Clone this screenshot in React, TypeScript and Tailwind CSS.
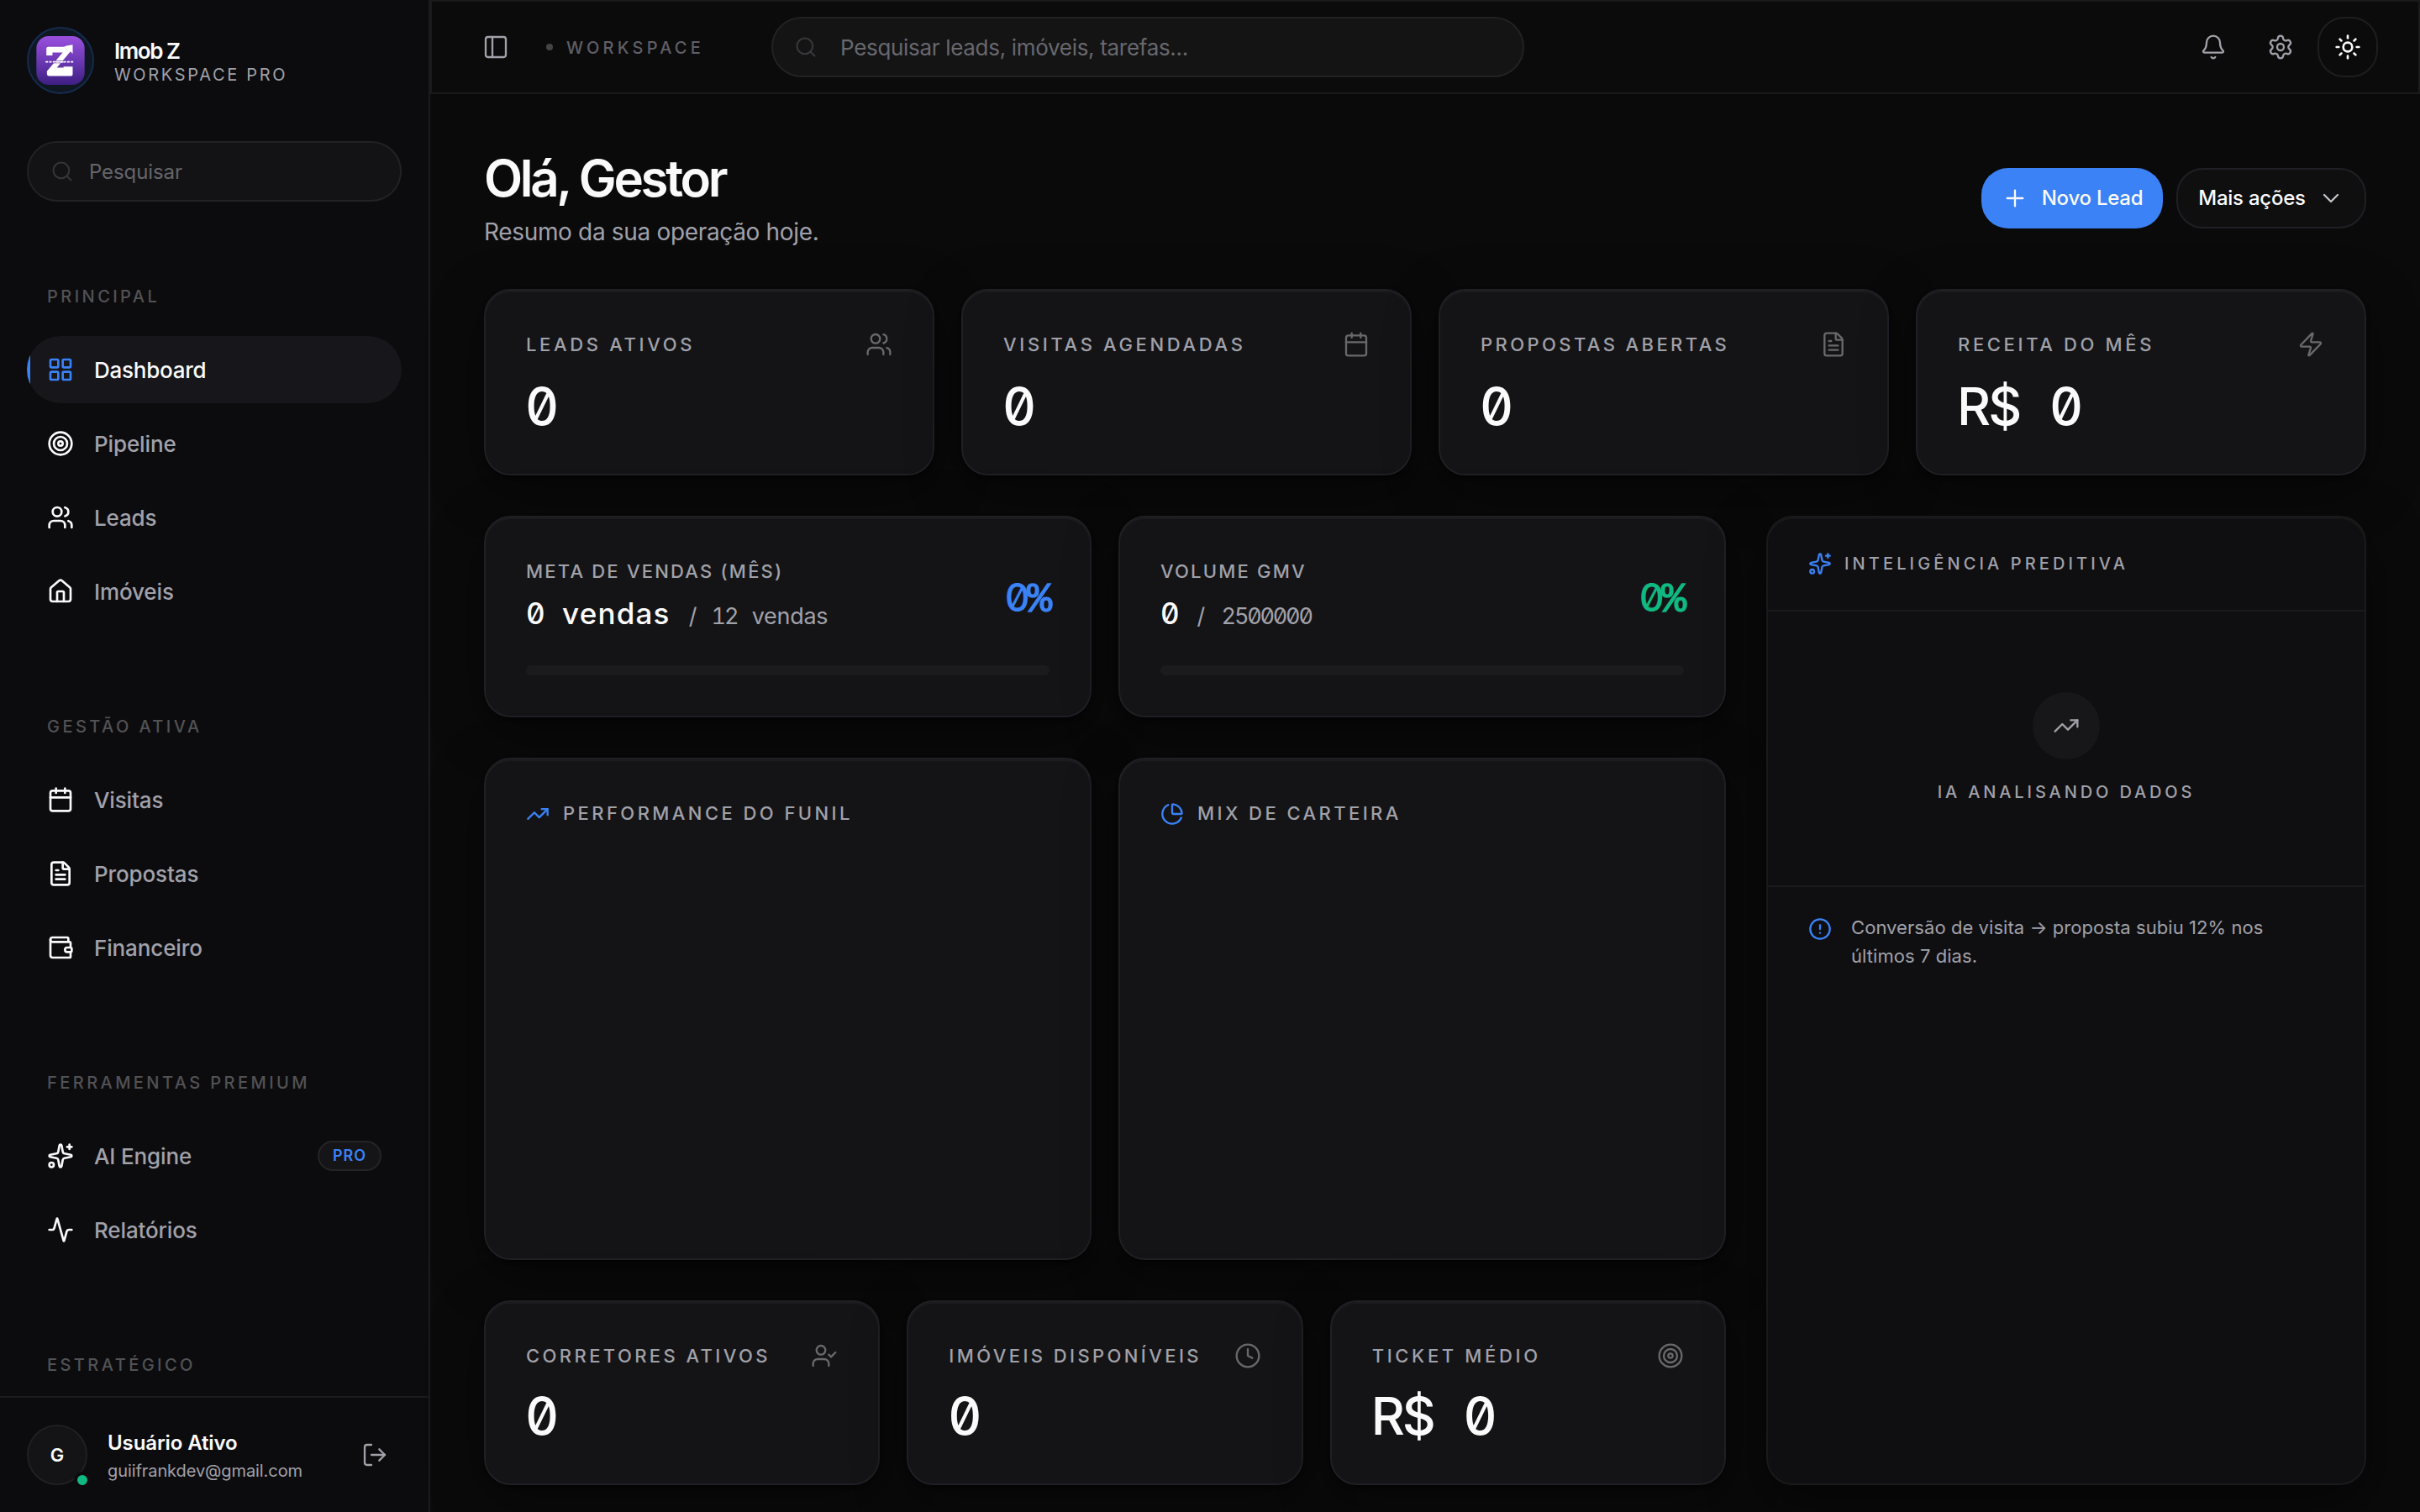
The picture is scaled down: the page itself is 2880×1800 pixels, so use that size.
import type { ReactNode } from "react";
import {
  Activity,
  Bell,
  Calendar,
  ChartPie,
  ChevronDown,
  CircleAlert,
  Clock,
  FileText,
  House,
  LayoutGrid,
  LogOut,
  PanelLeft,
  Plus,
  Search,
  Settings,
  Sparkles,
  Sun,
  Target,
  TrendingUp,
  UserCheck,
  Users,
  Wallet,
  Zap,
  type LucideIcon,
} from "lucide-react";

type NavItem = { label: string; icon: LucideIcon; active?: boolean; badge?: string };

const sections: { title: string; items: NavItem[] }[] = [
  {
    title: "PRINCIPAL",
    items: [
      { label: "Dashboard", icon: LayoutGrid, active: true },
      { label: "Pipeline", icon: Target },
      { label: "Leads", icon: Users },
      { label: "Imóveis", icon: House },
    ],
  },
  {
    title: "GESTÃO ATIVA",
    items: [
      { label: "Visitas", icon: Calendar },
      { label: "Propostas", icon: FileText },
      { label: "Financeiro", icon: Wallet },
    ],
  },
  {
    title: "FERRAMENTAS PREMIUM",
    items: [
      { label: "AI Engine", icon: Sparkles, badge: "PRO" },
      { label: "Relatórios", icon: Activity },
    ],
  },
  { title: "ESTRATÉGICO", items: [] },
];

const CARD =
  "rounded-[32px] border-2 border-[#1f1f25] bg-[#141416] shadow-[inset_0_2px_0_rgba(255,255,255,0.035),0_2px_4px_rgba(0,0,0,0.5),0_16px_64px_rgba(0,0,0,0.4)]";

const NUM = "[font-feature-settings:'zero','tnum']";

function Logo() {
  return (
    <div className="flex size-20 shrink-0 items-center justify-center rounded-full border-2 border-[#162b4e] bg-[#0f1722]">
      <svg viewBox="0 0 174 176" className="h-[58px] w-[58px]">
        <defs>
          <linearGradient id="logo-bg" x1="0" y1="0" x2="0" y2="1">
            <stop offset="0" stopColor="#9a50de" />
            <stop offset="0.5" stopColor="#6d39b4" />
            <stop offset="1" stopColor="#3d1f83" />
          </linearGradient>
        </defs>
        <rect width="174" height="176" rx="44" fill="url(#logo-bg)" />
        <path
          d="M42 39 H94 Q102 39 108 35 L131 31 V64 L123 55 L74 114 H98 V110 H131 V138 Q131 144 125 144 H46 Q38 144 38 136 V127 L95 59 H58 V70 H36 V45 Q36 39 42 39 Z"
          fill="#fff"
        />
        <path d="M33 93 H136" stroke="#6a38b0" strokeWidth="10" />
        <path d="M33 93 H136" stroke="#fff" strokeWidth="5" strokeDasharray="9 4" />
        <path d="M68 93 H98" stroke="#fff" strokeWidth="5" />
      </svg>
    </div>
  );
}

function Sidebar() {
  return (
    <aside className="flex h-full w-[512px] shrink-0 flex-col border-r-2 border-[#1b1b1d] bg-[#0c0c0e]">
      <div className="flex min-h-0 flex-1 flex-col overflow-hidden px-8 pt-8">
        <div className="flex shrink-0 items-center gap-6">
          <Logo />
          <div>
            <div className="text-[26px] leading-[33px] font-semibold tracking-[-0.055em] text-[#fafafa]">Imob Z</div>
            <div className="text-[20px] leading-[24px] tracking-[0.133em] text-[#a1a1aa]">WORKSPACE PRO</div>
          </div>
        </div>
        <div className="mt-14 flex h-[72px] shrink-0 items-center gap-[18px] rounded-[36px] border-2 border-[#222224] bg-[#131315] pl-[26px]">
          <Search size={28} strokeWidth={1.75} className="text-[#36363a]" />
          <span className="pt-0.5 text-[24px] leading-9 tracking-[-0.1px] text-[#65656b]">Pesquisar</span>
        </div>
        <nav className="flex shrink-0 flex-col gap-[106px] pt-[98px]">
          {sections.map((section) => (
            <div key={section.title}>
              <div className="mb-8 pl-6 text-[20px] leading-[30px] font-medium tracking-[0.172em] text-[#525255]">
                {section.title}
              </div>
              <div className="flex flex-col gap-2">
                {section.items.map(({ label, icon: Icon, active, badge }) => (
                  <div
                    key={label}
                    className={
                      active
                        ? "relative flex h-20 items-center gap-6 overflow-hidden rounded-[40px] bg-[#16161b] px-6"
                        : "flex h-20 items-center gap-6 px-6"
                    }
                  >
                    {active && <span className="absolute top-5 left-0 h-10 w-1 bg-[#3b82f6]" />}
                    <Icon size={32} strokeWidth={2} className={active ? "text-[#3b82f6]" : "text-[#fafafa]"} />
                    <span
                      className={
                        active
                          ? "text-[26px] leading-[39px] font-medium tracking-[-0.01em] text-[#fafafa]"
                          : "text-[26px] leading-[39px] font-medium tracking-[-0.005em] text-[#a1a1aa]"
                      }
                    >
                      {label}
                    </span>
                    {badge && (
                      <span className="ml-auto flex h-9 items-center rounded-full border-2 border-[#242426] bg-[#151517] px-4 text-[18px] leading-none font-semibold tracking-[0.05em] text-[#3b82f6]">
                        {badge}
                      </span>
                    )}
                  </div>
                ))}
              </div>
            </div>
          ))}
        </nav>
      </div>
      <div className="flex shrink-0 items-center gap-6 border-t-2 border-[#1b1b1d] p-8">
        <div className="relative flex size-[72px] shrink-0 items-center justify-center rounded-full border-2 border-[#202022] bg-[#141416] text-[22px] font-semibold text-[#fafafa]">
          G
          <span className="absolute -right-1.5 -bottom-1.5 size-5 rounded-full border-4 border-[#0c0c0e] bg-[#10b981]" />
        </div>
        <div className="flex-1">
          <div className="text-[24px] leading-[38px] font-semibold tracking-[-0.1px] text-[#fafafa]">Usuário Ativo</div>
          <div className="text-[20px] leading-[29px] tracking-[-0.08px] text-[#a1a1aa]">guiifrankdev@gmail.com</div>
        </div>
        <button className="flex size-16 items-center justify-center text-[#a1a1aa]">
          <LogOut size={32} strokeWidth={1.75} />
        </button>
      </div>
    </aside>
  );
}

function Header() {
  return (
    <header className="flex h-28 shrink-0 items-center border-2 border-[#1a1a1b] bg-[#0b0b0b] px-12">
      <button className="flex size-14 items-center justify-center text-[#a1a1aa]">
        <PanelLeft size={32} strokeWidth={1.75} />
      </button>
      <div className="ml-8 flex w-[268px] items-center gap-4">
        <span className="size-2 rounded-full bg-[#444446]" />
        <span className="pt-px text-[20px] leading-[30px] font-medium tracking-[0.21em] text-[#5f5f65]">WORKSPACE</span>
      </div>
      <div className="flex h-[72px] w-[896px] items-center gap-[27px] rounded-[36px] border-2 border-[#222223] bg-[#141415] pl-[25px]">
        <Search size={28} strokeWidth={1.75} className="text-[#39393c]" />
        <span className="text-[26px] leading-[39px] tracking-[-0.012em] text-[#68686e]">
          Pesquisar leads, imóveis, tarefas...
        </span>
      </div>
      <div className="ml-auto flex items-center gap-2 text-[#a1a1aa]">
        <button className="flex size-[72px] items-center justify-center">
          <Bell size={32} strokeWidth={1.75} />
        </button>
        <button className="flex size-[72px] items-center justify-center">
          <Settings size={32} strokeWidth={1.75} />
        </button>
        <button className="flex size-[72px] items-center justify-center rounded-[32px] border-2 border-[#1e1e1f] text-[#fafafa]">
          <Sun size={32} strokeWidth={2} />
        </button>
      </div>
    </header>
  );
}

type StatProps = { label: string; icon: LucideIcon; value: string; compact?: boolean; tight?: boolean };

function Stat({ label, icon: Icon, value, compact, tight }: StatProps) {
  return (
    <div className={`${CARD} p-12`}>
      <div className="flex h-8 items-center justify-between">
        <span
          className={`${tight ? "tracking-[0.155em]" : "tracking-[0.166em]"} text-[22px] leading-8 font-medium whitespace-nowrap text-[#a1a1aa]`}
        >
          {label}
        </span>
        <Icon size={32} strokeWidth={1.75} className="shrink-0 text-[#69696d]" />
      </div>
      <div
        className={`${NUM} ${compact ? "mt-6" : "mt-[26px]"} -ml-px h-16 text-[62px] leading-[64px] font-medium tracking-[-3px] [word-spacing:22px] whitespace-nowrap text-[#fafafa]`}
      >
        {value}
      </div>
    </div>
  );
}

function Goal({ label, value, target, color }: { label: string; value: ReactNode; target: ReactNode; color: string }) {
  return (
    <div className={`${CARD} h-[240px] p-12`}>
      <div className="mb-[34px] flex h-[94px] items-center justify-between">
        <div className="h-[94px]">
          <div className="text-[22px] leading-[33px] font-medium tracking-[0.1em] text-[#a1a1aa]">{label}</div>
          <div className={`${NUM} mt-2 h-[51px] text-[35px] leading-[51px] font-medium whitespace-nowrap text-[#fafafa]`}>
            {value}
            <span className="ml-[22px] text-[27px] font-normal text-[#a1a1aa] [word-spacing:10px]">/ {target}</span>
          </div>
        </div>
        <div className={`${NUM} ${color} flex items-baseline text-[47px] leading-[66px] font-medium`}>
          <span className="tracking-[-4px]">0</span>
          <span className="font-['Liberation_Mono',monospace] text-[50px] leading-none font-normal tracking-[-3px] [-webkit-text-stroke:1.5px_currentColor]">
            %
          </span>
        </div>
      </div>
      <div className="h-3 rounded-full bg-[#1b1b1d]" />
    </div>
  );
}

function ChartCard({ label, icon: Icon }: { label: string; icon: LucideIcon }) {
  return (
    <div className={`${CARD} h-[598px] p-12`}>
      <div className="flex items-center gap-4">
        <Icon size={28} strokeWidth={2} className="text-[#3b82f6]" />
        <span className="text-[22px] leading-[33px] font-medium tracking-[0.156em] text-[#a1a1aa]">{label}</span>
      </div>
    </div>
  );
}

function Insights() {
  return (
    <div className="w-[714px] shrink-0 rounded-[32px] border-2 border-[#1a1a1b] bg-[#0f0f11] shadow-[inset_0_2px_0_rgba(255,255,255,0.035),0_24px_64px_rgba(0,0,0,0.5)]">
      <div className="flex items-center gap-[15px] border-b-2 border-[#1a1a1b] px-12 py-10">
        <Sparkles size={28} strokeWidth={2} className="text-[#3b82f6]" />
        <span className="text-[20px] leading-[30px] font-medium tracking-[0.206em] text-[#a1a1aa]">INTELIGÊNCIA PREDITIVA</span>
      </div>
      <div className="flex flex-col items-center gap-6 border-b-2 border-[#1a1a1b] py-24">
        <div className="flex size-20 items-center justify-center rounded-full bg-[#171719] text-[#a1a1aa]">
          <TrendingUp size={32} strokeWidth={1.75} />
        </div>
        <span className="text-[20px] leading-[30px] font-medium tracking-[0.194em] text-[#a1a1aa]">IA ANALISANDO DADOS</span>
      </div>
      <div className="flex gap-[23px] px-12 pt-8">
        <CircleAlert size={28} strokeWidth={2} className="mt-1 shrink-0 text-[#3b82f6]" />
        <p className="-mt-px w-[510px] text-[22px] leading-[34px] tracking-[0.06px] text-[#a1a1aa]">
          Conversão de visita → proposta subiu 12% nos últimos 7 dias.
        </p>
      </div>
    </div>
  );
}

export default function App() {
  return (
    <div className="flex h-[1800px] w-[2880px] overflow-hidden bg-[#0a0a0a] font-[Inter,sans-serif] antialiased">
      <Sidebar />
      <div className="flex min-w-0 flex-1 flex-col">
        <Header />
        <main className="px-16 pt-16">
          <div className="mb-12 flex h-[120px] items-center justify-between">
            <div className="h-[120px]">
              <h1 className="text-[60px] leading-[72px] font-semibold tracking-[-0.055em] text-[#fafafa]">Olá, Gestor</h1>
              <p className="mt-[7px] text-[28px] leading-[42px] tracking-[-0.012em] text-[#a1a1aa]">
                Resumo da sua operação hoje.
              </p>
            </div>
            <div className="flex gap-4 text-[24px] leading-9 font-medium tracking-[-0.01em] whitespace-nowrap text-[#fafafa]">
              <button className="flex h-[72px] w-[216px] items-center justify-center gap-4 rounded-[32px] bg-[#3b82f6]">
                <Plus size={32} strokeWidth={1.75} className="shrink-0" />
                Novo Lead
              </button>
              <button className="flex h-[72px] w-[226px] items-center justify-center gap-3.5 rounded-[32px] border-2 border-[#1f1f25] bg-[#0f0f10]">
                Mais ações
                <ChevronDown size={32} strokeWidth={1.75} className="shrink-0 text-[#c4c4c8]" />
              </button>
            </div>
          </div>

          <div className="grid h-[222px] grid-cols-4 gap-8">
            <Stat label="LEADS ATIVOS" icon={Users} value="0" />
            <Stat label="VISITAS AGENDADAS" icon={Calendar} value="0" />
            <Stat tight label="PROPOSTAS ABERTAS" icon={FileText} value="0" />
            <Stat label="RECEITA DO MÊS" icon={Zap} value="R$ 0" />
          </div>

          <div className="mt-12 flex gap-12">
            <div className="flex flex-1 flex-col gap-12">
              <div className="grid grid-cols-2 gap-8">
                <Goal
                  label="META DE VENDAS (MÊS)"
                  color="text-[#3b82f6]"
                  value={
                    <span className="[word-spacing:12px]">
                      <span className="tracking-[-1.1px]">0</span> <span className="tracking-[1.2px]">vendas</span>
                    </span>
                  }
                  target={
                    <>
                      <span className="tracking-[-2.1px]">12</span> <span className="tracking-[-0.3px]">vendas</span>
                    </>
                  }
                />
                <Goal
                  label="VOLUME GMV"
                  color="text-[#10b981]"
                  value={<span className="tracking-[-1.1px]">0</span>}
                  target={<span className="ml-0.5 tracking-[-2.2px]">2500000</span>}
                />
              </div>
              <div className="grid grid-cols-2 gap-8">
                <ChartCard label="PERFORMANCE DO FUNIL" icon={TrendingUp} />
                <ChartCard label="MIX DE CARTEIRA" icon={ChartPie} />
              </div>
              <div className="grid h-[220px] grid-cols-3 gap-8">
                <Stat compact tight label="CORRETORES ATIVOS" icon={UserCheck} value="0" />
                <Stat compact tight label="IMÓVEIS DISPONÍVEIS" icon={Clock} value="0" />
                <Stat compact label="TICKET MÉDIO" icon={Target} value="R$ 0" />
              </div>
            </div>
            <Insights />
          </div>
        </main>
      </div>
    </div>
  );
}
